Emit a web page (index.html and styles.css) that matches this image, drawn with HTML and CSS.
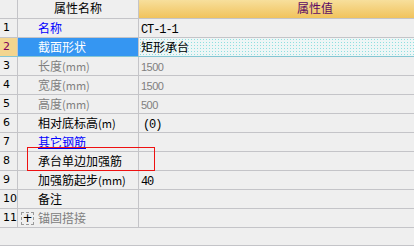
FILE: index.html
```html
<!DOCTYPE html>
<html>
<head>
<meta charset="utf-8">
<link rel="stylesheet" href="styles.css">
</head>
<body>
<div class="grid">
  <div class="row head">
    <div class="c n"></div>
    <div class="c name hname">属性名称</div>
    <div class="c val hval">属性值</div>
  </div>
  <div class="row">
    <div class="c n">1</div>
    <div class="c name blue">名称</div>
    <div class="c val"><span class="mono">CT-1-1</span></div>
  </div>
  <div class="row sel">
    <div class="c n seln">2</div>
    <div class="c name selname">截面形状</div>
    <div class="c val selval">矩形承台</div>
  </div>
  <div class="row">
    <div class="c n">3</div>
    <div class="c name grey">长度<span class="unit">(mm)</span></div>
    <div class="c val"><span class="gnum">1500</span></div>
  </div>
  <div class="row">
    <div class="c n">4</div>
    <div class="c name grey">宽度<span class="unit">(mm)</span></div>
    <div class="c val"><span class="gnum">1500</span></div>
  </div>
  <div class="row">
    <div class="c n">5</div>
    <div class="c name grey">高度<span class="unit">(mm)</span></div>
    <div class="c val"><span class="gnum">500</span></div>
  </div>
  <div class="row">
    <div class="c n">6</div>
    <div class="c name">相对底标高<span class="unit">(m)</span></div>
    <div class="c val"><span class="mono ind">(0)</span></div>
  </div>
  <div class="row">
    <div class="c n">7</div>
    <div class="c name blue link">其它钢筋</div>
    <div class="c val"></div>
  </div>
  <div class="row">
    <div class="c n">8</div>
    <div class="c name">承台单边加强筋</div>
    <div class="c val"></div>
  </div>
  <div class="row">
    <div class="c n">9</div>
    <div class="c name">加强筋起步<span class="unit">(mm)</span></div>
    <div class="c val"><span class="mono">40</span></div>
  </div>
  <div class="row">
    <div class="c n">10</div>
    <div class="c name">备注</div>
    <div class="c val"></div>
  </div>
  <div class="row">
    <div class="c n">11</div>
    <div class="c name grey exp"><span class="plus">+</span>锚固搭接</div>
    <div class="c val"></div>
  </div>
  <div class="row tail"></div>
  <div class="redbox"></div>
</div>
</body>
</html>
```
FILE: styles.css
```css
body {
  margin: 0;
  background: #efefef;
  font: 12px "Noto Sans CJK SC", sans-serif;
  color: #000;
}
.grid {
  position: relative;
  width: 414px;
  height: 246px;
  overflow: hidden;
}
.row {
  display: flex;
  height: 18px;
  border-bottom: 1px solid #c4c4c8;
}
.c {
  line-height: 18px;
  white-space: nowrap;
  overflow: hidden;
  box-sizing: border-box;
  height: 18px;
}
.n {
  flex: 0 0 18px;
  border-right: 1px solid #c4c4c8;
  padding-left: 3px;
  font: 11px "DejaVu Sans", sans-serif;
  line-height: 18px;
}
.name {
  flex: 0 0 121px;
  border-right: 1px solid #c4c4c8;
  padding-left: 20px;
}
.val {
  flex: 1;
  padding-left: 2px;
}
.head .c {
  line-height: 16px;
}
.hname {
  padding-left: 0;
  text-align: center;
}
.hval {
  padding-left: 158px;
  background: linear-gradient(#f7df9c, #f1c35c);
  color: #5c0a66;
}
.blue {
  color: #0000ff;
}
.link {
  text-decoration: underline;
  text-underline-offset: 1px;
}
.grey {
  color: #808080;
}
.unit {
  font-size: 11px;
}
.mono {
  font: 12px "Liberation Mono", monospace;
  letter-spacing: -1.1px;
}
.ind {
  padding-left: 2px;
}
.gnum {
  font: 11px "Liberation Sans", sans-serif;
  letter-spacing: -0.5px;
  color: #808080;
}
.seln {
  background: #f3d58f;
  color: #80005a;
}
.selname {
  background: #3596f2;
  color: #fff;
}
.selval {
  background-color: #eef6f6;
  background-image: radial-gradient(circle, #8fe0e0 0.7px, transparent 0.9px);
  background-size: 3px 3px;
}
.sel {
  border-bottom-color: #86c6d2;
}
.exp {
  display: flex;
  align-items: center;
  padding-left: 3px;
}
.plus {
  display: flex;
  align-items: center;
  justify-content: center;
  flex: 0 0 13px;
  height: 13px;
  box-sizing: border-box;
  border: 1px dashed #9a9a9a;
  color: #000;
  font: 12px "DejaVu Sans", sans-serif;
  line-height: 11px;
  margin-right: 4px;
}
.tail {
  height: 17px;
}
.redbox {
  position: absolute;
  left: 27px;
  top: 147px;
  width: 128px;
  height: 24px;
  box-sizing: border-box;
  border: 1px solid #ee1111;
}
```
